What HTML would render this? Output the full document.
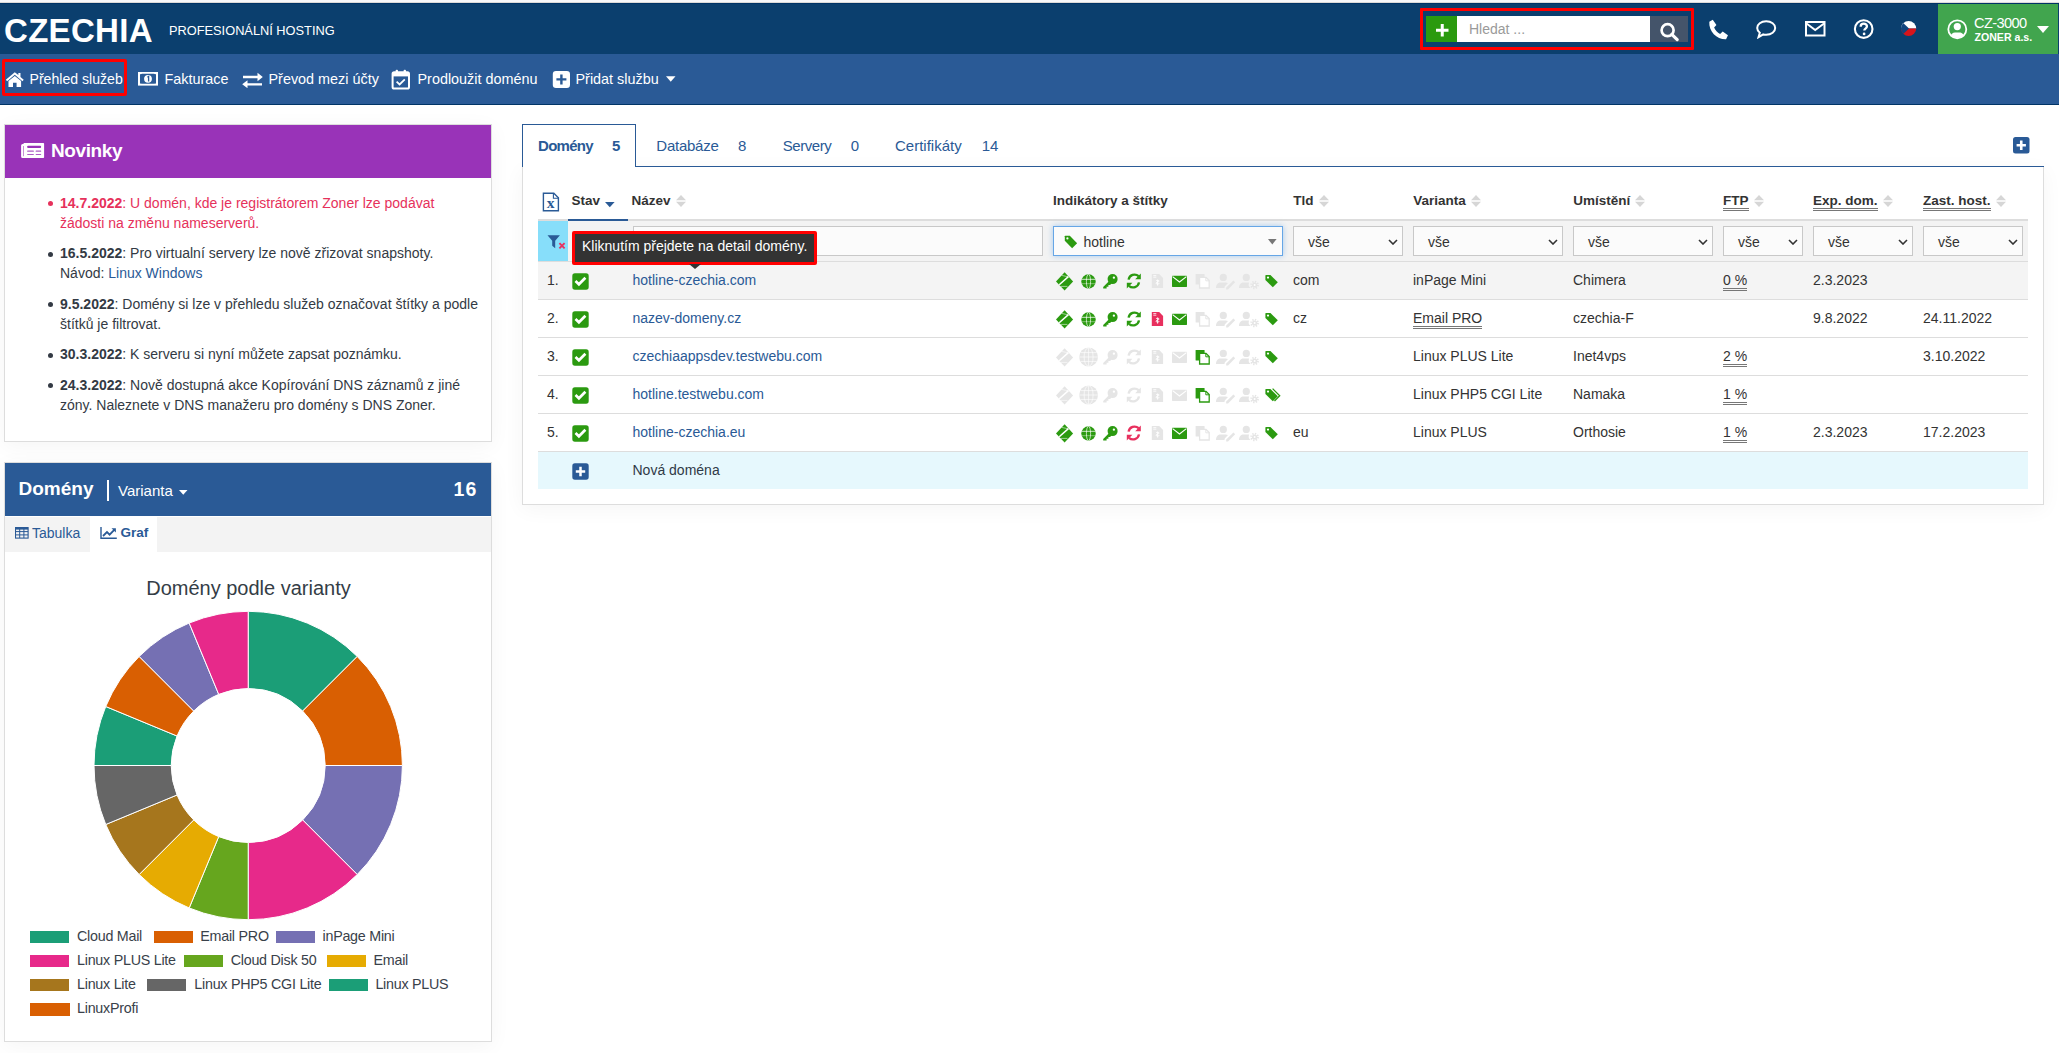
<!DOCTYPE html>
<html><head><meta charset="utf-8">
<style>
*{box-sizing:border-box}
html,body{margin:0;padding:0;width:2059px;height:1053px;overflow:hidden;background:#fff;font-family:"Liberation Sans",sans-serif;color:#333;font-size:14px}
.abs{position:absolute}
#topstrip{left:0;top:0;width:2059px;height:3px;background:#f8f8fa;border-bottom:1px solid #dcdad8}
#hdr{left:0;top:3px;width:2059px;height:51px;background:#0b3f6e;border-top:1px solid #003366}
#nav{left:0;top:54px;width:2059px;height:51px;background:#2a5a96;border-bottom:1px solid #013466}
.logo{left:4px;top:8.5px;font-weight:bold;font-size:33px;color:#fff;letter-spacing:0.3px;line-height:36px}
.tagline{left:169px;top:18.5px;font-size:12.8px;color:#fff;line-height:16px}
.navitem{color:#fff;font-size:14.4px;line-height:20px;white-space:nowrap;top:69px!important}
.redbox{border:3px solid #f00;border-radius:2px}
.panel{background:#fff;border:1px solid #ddd;box-shadow:0 4px 20px rgba(0,0,0,0.045)}
.news{margin:0;padding:0 0 0 60px;list-style:none;font-size:14px;line-height:20px;color:#333a44}
.news li{position:relative;margin-bottom:10.5px}
.news li:before{content:"";position:absolute;left:-12px;top:8.5px;width:5px;height:5px;border-radius:50%;background:currentColor}
.news li.pink{color:#e6315b}
.news a{color:#2a5a96}
.legt{font-size:14.3px;letter-spacing:-0.25px;color:#39414a;line-height:20px;white-space:nowrap}
.li{display:inline-block;margin-right:7px}
.li i{display:inline-block;width:40px;height:13px;vertical-align:top;margin-top:4px;margin-right:7px}
/*RCSS*/.tab{top:136.6px;line-height:18px;color:#2a5a96;white-space:nowrap}
.th{top:192px;font-size:13.5px;font-weight:bold;color:#333;line-height:18px;white-space:nowrap}
.th .sort{display:inline-block;width:10px;height:12px;margin-left:5px;vertical-align:-2px}
.td{font-size:14px;line-height:20px;color:#333;white-space:nowrap}
.link{color:#2a5a96}
.ul span{border-bottom:3px double #777;padding-bottom:0px}
.inp{background:#fbfbfb;border:1px solid #c8c8c8}
/*/RCSS*/</style></head><body>
<div id="topstrip" class="abs"></div>
<div id="hdr" class="abs">
  <div class="abs logo">CZECHIA</div>
  <div class="abs tagline">PROFESIONÁLNÍ HOSTING</div>
</div>
<!-- search -->
<div class="abs redbox" style="left:1420px;top:8px;width:274px;height:42px;border-radius:1px"></div>
<div class="abs" style="left:1426px;top:16px;width:31px;height:26px;background:#2a9a0e"></div>
<svg class="abs" style="left:1435.5px;top:23.5px" width="13" height="13" viewBox="0 0 13 13"><path d="M6.25 0v12.6M0 6.3h12.5" stroke="#fff" stroke-width="3"/></svg>
<div class="abs" style="left:1457px;top:16px;width:193px;height:26px;background:#fff"></div>
<div class="abs" style="left:1469px;top:20px;font-size:14px;line-height:18px;color:#9a9a9a">Hledat ...</div>
<div class="abs" style="left:1650px;top:16px;width:38px;height:26px;background:#44546a"></div>
<svg class="abs" style="left:1659px;top:22px" width="21" height="20" viewBox="0 0 21 20"><circle cx="8.6" cy="8.2" r="6" fill="none" stroke="#fff" stroke-width="2.7"/><path d="M12.8 12.4l5.4 5.2" stroke="#fff" stroke-width="3.2" stroke-linecap="round"/></svg>
<!-- phone -->
<svg class="abs" style="left:1706.5px;top:18.5px" width="22" height="21" viewBox="0 0 21 20"><path d="M2.2 2.5 L5.5 0.8 L9 5.6 L6.8 8.2 C8 11 9.8 13 12.5 14.3 L15 12 L20 15.5 L18.2 19.2 C9.5 19.5 1.5 12 2.2 2.5Z" fill="#fff"/></svg>
<!-- chat -->
<svg class="abs" style="left:1756px;top:20px" width="21" height="19" viewBox="0 0 21 19"><path d="M10.2 1.3C5 1.3 1.2 4.3 1.2 8c0 1.9 1 3.5 2.6 4.7L2.5 17.2 7.3 14.4c0.9 0.2 1.9 0.3 2.9 0.3 5.2 0 9-3 9-6.7S15.4 1.3 10.2 1.3z" fill="none" stroke="#fff" stroke-width="2"/></svg>
<!-- mail -->
<svg class="abs" style="left:1805px;top:21px" width="21" height="16" viewBox="0 0 21 16"><rect x="1" y="1" width="18.5" height="13.5" fill="none" stroke="#fff" stroke-width="2"/><path d="M1.5 2.5L10.2 9l8.8-6.5" fill="none" stroke="#fff" stroke-width="2"/></svg>
<!-- help -->
<svg class="abs" style="left:1853px;top:18.5px" width="22" height="21" viewBox="0 0 21 20"><circle cx="10.2" cy="9.6" r="8.4" fill="none" stroke="#fff" stroke-width="2"/><path d="M7.3 7.3c0-1.8 1.3-2.9 3-2.9s3 1.1 3 2.6c0 2.2-2.5 2.2-2.5 4" fill="none" stroke="#fff" stroke-width="2.2"/><circle cx="10.6" cy="14.2" r="1.3" fill="#fff"/></svg>
<!-- flag -->
<svg class="abs" style="left:1900px;top:20px" width="17" height="17" viewBox="0 0 17 17"><defs><clipPath id="fc"><circle cx="8.6" cy="8.5" r="7.6"/></clipPath></defs><g clip-path="url(#fc)"><rect x="0" y="0" width="17" height="8.5" fill="#fff"/><rect x="0" y="8.5" width="17" height="9" fill="#d7141a"/><path d="M0 0L9 8.5L0 17z" fill="#11457e"/></g></svg>
<!-- user -->
<div class="abs" style="left:1938px;top:4px;width:120px;height:50px;background:#41a54e"></div>
<svg class="abs" style="left:1947px;top:19px" width="21" height="21" viewBox="0 0 21 21"><defs><clipPath id="uc"><circle cx="10.3" cy="10.3" r="8.6"/></clipPath></defs><circle cx="10.3" cy="10.3" r="9" fill="none" stroke="#fff" stroke-width="1.8"/><g clip-path="url(#uc)"><circle cx="10.3" cy="7.6" r="3.6" fill="#fff"/><path d="M3 18.5c0.5-3.5 3-5 5-5h4.6c2 0 4.5 1.5 5 5v3H3z" fill="#fff"/></g></svg>
<div class="abs" style="left:1974px;top:14.5px;font-size:14.6px;letter-spacing:-0.6px;line-height:16px;color:#fff">CZ-3000</div>
<div class="abs" style="left:1974.5px;top:31px;font-size:10.6px;letter-spacing:0px;line-height:12px;color:#fff;font-weight:bold">ZONER a.s.</div>
<svg class="abs" style="left:2037px;top:26px" width="12" height="7" viewBox="0 0 12 7"><path d="M0 0h12L6 7z" fill="#fff"/></svg>
<div id="nav" class="abs"></div>
<div class="abs redbox" style="left:2px;top:59px;width:125px;height:37px"></div>
<svg class="abs" style="left:4.5px;top:70.5px" width="20" height="17" viewBox="0 0 19 16"><path d="M9.3 1.2L0.8 8.3l1.2 1.3L9.3 3.6l7.3 6 1.2-1.3-3.1-2.6V1.8h-2v2L9.3 1.2z" fill="#fff"/><path d="M3.3 9.4L9.3 4.6l6 4.8v5.8H11v-4H7.6v4H3.3z" fill="#fff"/></svg>
<div class="abs navitem" style="left:29.5px;top:70px;font-size:14.1px">Přehled služeb</div>
<svg class="abs" style="left:137px;top:71px" width="22" height="16" viewBox="0 0 22 16"><rect x="1" y="1" width="20" height="13.6" fill="#fff"/><path d="M3 3.2 Q5 3.2 5 2.8 H17 Q17 3.2 19 3.2 V12.4 Q17 12.4 17 12.8 H5 Q5 12.4 3 12.4Z" fill="#2a5a96"/><circle cx="11" cy="7.8" r="3.9" fill="#fff"/><path d="M10.4 6.2l1.2-0.8v5" stroke="#2a5a96" stroke-width="1.3" fill="none"/></svg>
<svg class="abs" style="left:242px;top:72px" width="21" height="16" viewBox="0 0 21 16"><path d="M1 3.8h14.5V0.8L20.8 5l-5.3 4.2V6.3H1z" fill="#fff"/><path d="M20 11.2H5.5V8.3L0.2 12.2l5.3 4V13.6H20z" fill="#fff"/></svg>
<svg class="abs" style="left:391px;top:69px" width="20" height="21" viewBox="0 0 20 21"><rect x="1.6" y="3.2" width="16.4" height="16.4" rx="1.6" fill="none" stroke="#fff" stroke-width="2"/><rect x="1.6" y="3.2" width="16.4" height="4.2" fill="#fff"/><rect x="4.6" y="0.8" width="2.4" height="4.4" rx="1" fill="#fff"/><rect x="12.6" y="0.8" width="2.4" height="4.4" rx="1" fill="#fff"/><path d="M5.6 12.6l3 2.8 5.2-5" fill="none" stroke="#fff" stroke-width="1.8"/></svg>
<svg class="abs" style="left:552px;top:70px" width="19" height="19" viewBox="0 0 19 19"><rect x="0.8" y="0.9" width="17.2" height="17" rx="3.2" fill="#fff"/><path d="M9.4 4.4v10M4.4 9.4h10" stroke="#2a5a96" stroke-width="2.4"/></svg>
<svg class="abs" style="left:666px;top:76px" width="10" height="6" viewBox="0 0 10 6"><path d="M0 0.3h9.5L4.75 5.8z" fill="#fff"/></svg>
<div class="abs navitem" style="left:164.5px;top:70px">Fakturace</div>
<div class="abs navitem" style="left:268.5px;top:70px">Převod mezi účty</div>
<div class="abs navitem" style="left:417.5px;top:70px">Prodloužit doménu</div>
<div class="abs navitem" style="left:575.5px;top:70px">Přidat službu</div>

<!-- Novinky panel -->
<div class="abs panel" style="left:4px;top:124px;width:488px;height:318px"></div>
<div class="abs" style="left:5px;top:125px;width:486px;height:53px;background:#9933b8"></div>
<svg class="abs" style="left:21px;top:142px" width="24" height="17" viewBox="0 0 24 17"><path d="M2.6 0.9H22.3a0.8 0.8 0 0 1 0.8 0.8V15.2a0.8 0.8 0 0 1-0.8 0.8H1.6A1.5 1.5 0 0 1 0.1 14.5V3.4A1.5 1.5 0 0 1 1.6 1.9H2.6z" fill="#fff"/><rect x="2.1" y="4" width="0.9" height="10.2" fill="#9933b8" opacity="0.6"/><rect x="6.1" y="3.7" width="14" height="2.2" rx="1" fill="#9933b8"/><rect x="6.1" y="8.6" width="6.8" height="1.2" rx="0.5" fill="#9933b8" opacity="0.8"/><rect x="14.6" y="8.6" width="5.6" height="1.2" rx="0.5" fill="#9933b8" opacity="0.8"/><rect x="6.1" y="11.9" width="6.8" height="1.2" rx="0.5" fill="#9933b8" opacity="0.8"/><rect x="14.6" y="11.9" width="5.6" height="1.2" rx="0.5" fill="#9933b8" opacity="0.8"/></svg>
<div class="abs" style="left:51px;top:139px;font-size:19px;letter-spacing:-0.4px;font-weight:bold;color:#fff;line-height:24px">Novinky</div>
<ul class="abs news" style="left:0;top:192.5px;width:480px">
<li class="pink"><b>14.7.2022</b>: U domén, kde je registrátorem Zoner lze podávat žádosti na změnu nameserverů.</li>
<li><b>16.5.2022</b>: Pro virtualní servery lze nově zřizovat snapshoty. Návod: <a>Linux</a> <a>Windows</a></li>
<li><b>9.5.2022</b>: Domény si lze v přehledu služeb označovat štítky a podle štítků je filtrovat.</li>
<li><b>30.3.2022</b>: K serveru si nyní můžete zapsat poznámku.</li>
<li><b>24.3.2022</b>: Nově dostupná akce Kopírování DNS záznamů z jiné zóny. Naleznete v DNS manažeru pro domény s DNS Zoner.</li>
</ul>
<!-- Domeny panel -->
<div class="abs panel" style="left:4px;top:462px;width:488px;height:580px"></div>
<div class="abs" style="left:5px;top:463px;width:486px;height:53px;background:#2a5a96"></div>
<div class="abs" style="left:18.5px;top:477px;font-size:19px;letter-spacing:0px;font-weight:bold;color:#fff;line-height:24px">Domény</div>
<div class="abs" style="left:107px;top:480px;width:1.6px;height:21px;background:#fff"></div>
<div class="abs" style="left:118px;top:481px;font-size:15px;color:#fff;line-height:20px">Varianta</div>
<svg class="abs" style="left:179px;top:489.5px" width="9" height="5" viewBox="0 0 9 5"><path d="M0 0h8.5L4.25 4.8z" fill="#fff"/></svg>
<div class="abs" style="left:453.5px;top:477px;font-size:19.5px;letter-spacing:1.2px;font-weight:bold;color:#fff;line-height:24px">16</div>
<div class="abs" style="left:5px;top:517px;width:486px;height:35px;background:#f3f3f3"></div>
<div class="abs" style="left:90px;top:517px;width:67px;height:35px;background:#fff"></div>
<svg class="abs" style="left:15px;top:527px" width="14" height="12" viewBox="0 0 14 12"><rect x="0.5" y="0.5" width="12.6" height="10.6" fill="none" stroke="#2a5a96" stroke-width="1.1"/><path d="M0.5 1.8h12.6" stroke="#2a5a96" stroke-width="1.6"/><path d="M0.5 4.6h12.6M0.5 7.9h12.6M4.7 2v9M8.9 2v9" stroke="#2a5a96" stroke-width="1"/></svg>
<div class="abs" style="left:32px;top:524px;font-size:14px;color:#2a5a96;line-height:18px">Tabulka</div>
<svg class="abs" style="left:100px;top:527px" width="17" height="12" viewBox="0 0 17 12"><path d="M1 0v11.2h15.8" fill="none" stroke="#2a5a96" stroke-width="1.4"/><path d="M3 9L7 5l2.6 2.6L14.5 2.6" fill="none" stroke="#2a5a96" stroke-width="1.8"/><path d="M11.5 1.2h4.4v4.4z" fill="#2a5a96"/></svg>
<div class="abs" style="left:120.5px;top:524px;font-size:13.5px;font-weight:bold;color:#2a5a96;line-height:18px">Graf</div>
<div class="abs" style="left:5px;top:576px;width:487px;text-align:center;font-size:20px;color:#343d46;line-height:24px">Domény podle varianty</div>
<svg class="abs" style="left:0;top:0" width="500" height="1053"><path d="M248.20 611.30A154.2 154.2 0 0 1 357.24 656.46L302.65 711.05A77 77 0 0 0 248.20 688.50Z" fill="#1b9e77" stroke="#fff" stroke-width="1"/><path d="M357.24 656.46A154.2 154.2 0 0 1 402.40 765.50L325.20 765.50A77 77 0 0 0 302.65 711.05Z" fill="#d95f02" stroke="#fff" stroke-width="1"/><path d="M402.40 765.50A154.2 154.2 0 0 1 357.24 874.54L302.65 819.95A77 77 0 0 0 325.20 765.50Z" fill="#7570b3" stroke="#fff" stroke-width="1"/><path d="M357.24 874.54A154.2 154.2 0 0 1 248.20 919.70L248.20 842.50A77 77 0 0 0 302.65 819.95Z" fill="#e7298a" stroke="#fff" stroke-width="1"/><path d="M248.20 919.70A154.2 154.2 0 0 1 189.19 907.96L218.73 836.64A77 77 0 0 0 248.20 842.50Z" fill="#66a61e" stroke="#fff" stroke-width="1"/><path d="M189.19 907.96A154.2 154.2 0 0 1 139.16 874.54L193.75 819.95A77 77 0 0 0 218.73 836.64Z" fill="#e6ab02" stroke="#fff" stroke-width="1"/><path d="M139.16 874.54A154.2 154.2 0 0 1 105.74 824.51L177.06 794.97A77 77 0 0 0 193.75 819.95Z" fill="#a6761d" stroke="#fff" stroke-width="1"/><path d="M105.74 824.51A154.2 154.2 0 0 1 94.00 765.50L171.20 765.50A77 77 0 0 0 177.06 794.97Z" fill="#666666" stroke="#fff" stroke-width="1"/><path d="M94.00 765.50A154.2 154.2 0 0 1 105.74 706.49L177.06 736.03A77 77 0 0 0 171.20 765.50Z" fill="#1b9e77" stroke="#fff" stroke-width="1"/><path d="M105.74 706.49A154.2 154.2 0 0 1 139.16 656.46L193.75 711.05A77 77 0 0 0 177.06 736.03Z" fill="#d95f02" stroke="#fff" stroke-width="1"/><path d="M139.16 656.46A154.2 154.2 0 0 1 189.19 623.04L218.73 694.36A77 77 0 0 0 193.75 711.05Z" fill="#7570b3" stroke="#fff" stroke-width="1"/><path d="M189.19 623.04A154.2 154.2 0 0 1 248.20 611.30L248.20 688.50A77 77 0 0 0 218.73 694.36Z" fill="#e7298a" stroke="#fff" stroke-width="1"/></svg>

<div class="abs" style="left:30.4px;top:930.5px;width:39px;height:12.6px;background:#1b9e77"></div><div class="abs legt" style="left:77px;top:926.0px">Cloud Mail</div><div class="abs" style="left:153.7px;top:930.5px;width:39px;height:12.6px;background:#d95f02"></div><div class="abs legt" style="left:200.3px;top:926.0px">Email PRO</div><div class="abs" style="left:276px;top:930.5px;width:39px;height:12.6px;background:#7570b3"></div><div class="abs legt" style="left:322.5px;top:926.0px">inPage Mini</div><div class="abs" style="left:30.4px;top:954.5px;width:39px;height:12.6px;background:#e7298a"></div><div class="abs legt" style="left:77px;top:950.0px">Linux PLUS Lite</div><div class="abs" style="left:184px;top:954.5px;width:39px;height:12.6px;background:#66a61e"></div><div class="abs legt" style="left:230.7px;top:950.0px">Cloud Disk 50</div><div class="abs" style="left:326.9px;top:954.5px;width:39px;height:12.6px;background:#e6ab02"></div><div class="abs legt" style="left:373.5px;top:950.0px">Email</div><div class="abs" style="left:30.4px;top:978.5px;width:39px;height:12.6px;background:#a6761d"></div><div class="abs legt" style="left:77px;top:974.0px">Linux Lite</div><div class="abs" style="left:146.9px;top:978.5px;width:39px;height:12.6px;background:#666666"></div><div class="abs legt" style="left:194.3px;top:974.0px">Linux PHP5 CGI Lite</div><div class="abs" style="left:328.8px;top:978.5px;width:39px;height:12.6px;background:#1b9e77"></div><div class="abs legt" style="left:375.4px;top:974.0px">Linux PLUS</div><div class="abs" style="left:30.4px;top:1002.5px;width:39.5px;height:13px;background:#d95f02"></div><div class="abs legt" style="left:77px;top:998.0px">LinuxProfi</div>
<!--RIGHT--><svg width="0" height="0" style="position:absolute"><defs>
<symbol id="i-dns" viewBox="0 0 22 20"><path d="M10.6 1.3L19.1 10.4 10.6 19.6 2 10.4z"/><path d="M14.4 5.6L5.2 13.8" stroke="#fff" stroke-width="1.5"/><path d="M7.6 4.4L14.2 5.8M7 15.4h6.4" stroke="#fff" stroke-opacity="0.55" stroke-width="1"/></symbol>
<symbol id="i-globe" viewBox="0 0 22 20"><circle cx="9.5" cy="10.5" r="7.2"/><ellipse cx="9.5" cy="10.5" rx="2.1" ry="7.2" fill="none" stroke="#fff" stroke-opacity="0.75" stroke-width="0.9"/><path d="M2.3 8.3h14.4" stroke="#fff" stroke-opacity="0.85" stroke-width="0.9"/><path d="M2.5 12.7h14" stroke="#fff" stroke-opacity="0.45" stroke-width="0.9"/></symbol>
<symbol id="i-globe2" viewBox="0 0 22 20"><circle cx="9.6" cy="10" r="9.4"/><path d="M0.2 10h18.8M9.6 0.6v18.8M1.4 5.6h16.4M1.4 14.4h16.4" stroke="#fff" stroke-opacity="0.7" stroke-width="0.9"/><ellipse cx="9.6" cy="10" rx="4.5" ry="9.4" fill="none" stroke="#fff" stroke-opacity="0.7" stroke-width="0.9"/></symbol>
<symbol id="i-key" viewBox="0 0 22 20"><circle cx="11.6" cy="8.1" r="5"/><path d="M8.4 9.8L2.2 16V17.5H5.6V15.7H7.4V13.9H9.1L11.4 11.6z"/><circle cx="12.9" cy="6.7" r="1.15" fill="#fff"/></symbol>
<symbol id="i-sync" viewBox="0 0 22 20"><path d="M4.6 8.6A6 6 0 0 1 14.6 5.2" fill="none" stroke="currentColor" stroke-width="2.3"/><path d="M16.8 2.6v5.6h-5.6z"/><path d="M15 11.4A6 6 0 0 1 5 14.8" fill="none" stroke="currentColor" stroke-width="2.3"/><path d="M2.8 17.4v-5.6h5.6z"/></symbol>
<symbol id="i-inv" viewBox="0 0 22 20"><path d="M2.8 3h7.4l3.9 3.9V17H2.8z"/><path d="M8.6 8.6v6M7 10c0-1 3.2-1 3.2 0s-3.2 1-3.2 2.2 3.2 1.2 3.2 0" fill="none" stroke="#fff" stroke-width="0.9"/><path d="M4.3 4.6h3M4.3 6.2h3" stroke="#fff" stroke-width="0.8"/></symbol>
<symbol id="i-mail" viewBox="0 0 22 20"><rect x="2" y="4.7" width="15" height="11.2" rx="0.6"/><path d="M2.6 5.6L9.5 11l6.9-5.4" fill="none" stroke="#fff" stroke-width="1.1"/></symbol>
<symbol id="i-copy" viewBox="0 0 22 20"><rect x="2.6" y="3" width="9" height="10.6" rx="0.6"/><path d="M6.6 6.4h6.4l3.2 3.2V17H6.6z" fill="#fff" stroke="currentColor" stroke-width="1.3"/><path d="M12.8 6.4v3.4h3.4" fill="none" stroke="currentColor" stroke-width="1"/></symbol>
<symbol id="i-uedit" viewBox="0 0 22 20"><circle cx="8.3" cy="6.4" r="3.6"/><path d="M1 17c0-3.6 2-5.6 4.6-5.6h5c1 0 1.8 0.3 2.4 0.7L9.8 15.6 9.4 17z"/><path d="M11.2 16.6l7.2-7.2 1.8 1.8-7.2 7.2h-1.8z"/></symbol>
<symbol id="i-ucog" viewBox="0 0 22 20"><circle cx="8.3" cy="6.4" r="3.6"/><path d="M1 17c0-3.6 2-5.6 4.6-5.6h5.5A4.6 4.6 0 0 0 12.8 17z"/><circle cx="16.6" cy="14" r="3.4" fill="none" stroke="currentColor" stroke-width="1.8" stroke-dasharray="1.35 1.3"/><circle cx="16.6" cy="14" r="2.6"/><circle cx="16.6" cy="14" r="1" fill="#fff"/></symbol>
<symbol id="i-tag" viewBox="0 0 22 20"><path d="M2.4 4.3v4.6l7.4 7.4 5-5-7.4-7.4H3.3z"/><circle cx="5" cy="6.6" r="1.1" fill="#fff"/></symbol>
<symbol id="i-tags" viewBox="0 0 22 20"><path d="M2.4 4.3v4.6l7.4 7.4 5-5-7.4-7.4H3.3z"/><path d="M9.6 3.6l7.1 7.2-5.2 5.2" fill="none" stroke="currentColor" stroke-width="1.3"/><circle cx="5" cy="6.6" r="1.1" fill="#fff"/></symbol>
</defs></svg>
<div class="abs" style="left:522px;top:167px;width:1522px;height:338px;background:#fff;border:1px solid #ddd;border-top:none;box-shadow:0 4px 20px rgba(0,0,0,0.045)"></div>
<div class="abs" style="left:522px;top:166px;width:1522px;height:1px;background:#2a5a96"></div>
<div class="abs" style="left:522px;top:124px;width:114px;height:43px;background:#fff;border:1px solid #2a5a96;border-bottom:none"></div>
<div class="abs tab" style="left:538px;font-weight:bold;font-size:15px;letter-spacing:-0.7px">Domény</div><div class="abs tab" style="left:612px;font-weight:bold;font-size:15px">5</div>
<div class="abs tab" style="left:656.3px;font-weight:normal;font-size:15px;letter-spacing:-0.25px">Databáze</div><div class="abs tab" style="left:738px;font-weight:normal;font-size:15px">8</div>
<div class="abs tab" style="left:782.8px;font-weight:normal;font-size:15px;letter-spacing:-0.45px">Servery</div><div class="abs tab" style="left:850.8px;font-weight:normal;font-size:15px">0</div>
<div class="abs tab" style="left:895px;font-weight:normal;font-size:15px;letter-spacing:0px">Certifikáty</div><div class="abs tab" style="left:981.7px;font-weight:normal;font-size:15px">14</div>
<svg class="abs" style="left:2013px;top:137px" width="17" height="17" viewBox="0 0 17 17"><rect x="0" y="0" width="16.5" height="16.5" rx="2.5" fill="#2a5a96"/><path d="M8.25 3.6v9.3M3.6 8.25h9.3" stroke="#fff" stroke-width="2.6"/></svg>
<div class="abs" style="left:538px;top:219px;width:1490px;height:2px;background:#ddd"></div>
<div class="abs" style="left:568px;top:218.5px;width:60px;height:2.5px;background:#2a5a96"></div>
<svg class="abs" style="left:542px;top:191.5px" width="18" height="20" viewBox="0 0 18 20"><path d="M1.4 1.2h10.4l4.6 4.6V18.8H1.4z" fill="none" stroke="#2a5a96" stroke-width="1.4"/><path d="M11.4 1.2v5h5" fill="none" stroke="#2a5a96" stroke-width="1.1"/><text x="8.6" y="16" font-family="Liberation Serif" font-weight="bold" font-size="15.5" fill="#2a5a96" text-anchor="middle">x</text></svg>
<div class="abs th" style="left:571.5px"><span>Stav</span></div>
<div class="abs th" style="left:631.6px"><span>Název</span><svg class="sort" width="10" height="12" viewBox="0 0 10 12"><path d="M0 5.2L5 0l5 5.2zM0 6.8h10L5 12z" fill="#d6d6d6"/></svg></div>
<div class="abs th" style="left:1053px"><span>Indikátory a štítky</span></div>
<div class="abs th" style="left:1293.3px"><span>Tld</span><svg class="sort" width="10" height="12" viewBox="0 0 10 12"><path d="M0 5.2L5 0l5 5.2zM0 6.8h10L5 12z" fill="#d6d6d6"/></svg></div>
<div class="abs th" style="left:1413.2px"><span>Varianta</span><svg class="sort" width="10" height="12" viewBox="0 0 10 12"><path d="M0 5.2L5 0l5 5.2zM0 6.8h10L5 12z" fill="#d6d6d6"/></svg></div>
<div class="abs th" style="left:1573.2px"><span>Umístění</span><svg class="sort" width="10" height="12" viewBox="0 0 10 12"><path d="M0 5.2L5 0l5 5.2zM0 6.8h10L5 12z" fill="#d6d6d6"/></svg></div>
<div class="abs th ul" style="left:1723px"><span>FTP</span><svg class="sort" width="10" height="12" viewBox="0 0 10 12"><path d="M0 5.2L5 0l5 5.2zM0 6.8h10L5 12z" fill="#d6d6d6"/></svg></div>
<div class="abs th ul" style="left:1813px"><span>Exp. dom.</span><svg class="sort" width="10" height="12" viewBox="0 0 10 12"><path d="M0 5.2L5 0l5 5.2zM0 6.8h10L5 12z" fill="#d6d6d6"/></svg></div>
<div class="abs th ul" style="left:1923px"><span>Zast. host.</span><svg class="sort" width="10" height="12" viewBox="0 0 10 12"><path d="M0 5.2L5 0l5 5.2zM0 6.8h10L5 12z" fill="#d6d6d6"/></svg></div>
<svg class="abs" style="left:605px;top:201.5px" width="10" height="6" viewBox="0 0 10 6"><path d="M0 0h9.6L4.8 5.3z" fill="#2a5a96"/></svg>
<div class="abs" style="left:538px;top:221px;width:1490px;height:40px;background:#f3f3f3"></div>
<div class="abs" style="left:538px;top:221px;width:30px;height:40px;background:#87defa"></div>
<svg class="abs" style="left:546px;top:234px" width="20" height="17" viewBox="0 0 20 17"><path d="M1.5 1.2h12.4L9.2 6.8v7.4L6.2 11.8V6.8z" fill="#2a5a96"/><path d="M13.4 9.2l5.2 5.2M18.6 9.2l-5.2 5.2" stroke="#e8305e" stroke-width="1.9"/></svg>
<div class="abs inp" style="left:633px;top:226px;width:410px;height:30px"></div>
<div class="abs" style="left:1053px;top:226px;width:230px;height:30px;background:#fbfbfb;border:1.5px solid #66a6e6;box-shadow:0 0 6px rgba(102,166,230,0.55)"></div>
<svg class="abs" style="left:1064px;top:235px" width="14" height="14" viewBox="0 0 14 14"><path d="M0.8 1.2v4.6l7.3 7.4 5-5L5.8 0.8H1.2z" fill="#2b9a10"/><circle cx="3.4" cy="3.4" r="1.1" fill="#fbfbfb"/></svg>
<div class="abs td" style="left:1083.5px;top:232px">hotline</div>
<svg class="abs" style="left:1267.5px;top:238.5px" width="9" height="6" viewBox="0 0 9 6"><path d="M0 0h8.6L4.3 5.6z" fill="#777"/></svg>
<div class="abs inp" style="left:1293px;top:226px;width:110px;height:30px"></div><div class="abs td" style="left:1308px;top:232px">vše</div>
<svg class="abs" style="left:1388px;top:238.5px" width="10" height="6.5" viewBox="0 0 10 6.5"><path d="M1 1l4 4 4-4" fill="none" stroke="#333" stroke-width="1.6"/></svg>
<div class="abs inp" style="left:1413px;top:226px;width:150px;height:30px"></div><div class="abs td" style="left:1428px;top:232px">vše</div>
<svg class="abs" style="left:1548px;top:238.5px" width="10" height="6.5" viewBox="0 0 10 6.5"><path d="M1 1l4 4 4-4" fill="none" stroke="#333" stroke-width="1.6"/></svg>
<div class="abs inp" style="left:1573px;top:226px;width:140px;height:30px"></div><div class="abs td" style="left:1588px;top:232px">vše</div>
<svg class="abs" style="left:1698px;top:238.5px" width="10" height="6.5" viewBox="0 0 10 6.5"><path d="M1 1l4 4 4-4" fill="none" stroke="#333" stroke-width="1.6"/></svg>
<div class="abs inp" style="left:1723px;top:226px;width:80px;height:30px"></div><div class="abs td" style="left:1738px;top:232px">vše</div>
<svg class="abs" style="left:1788px;top:238.5px" width="10" height="6.5" viewBox="0 0 10 6.5"><path d="M1 1l4 4 4-4" fill="none" stroke="#333" stroke-width="1.6"/></svg>
<div class="abs inp" style="left:1813px;top:226px;width:100px;height:30px"></div><div class="abs td" style="left:1828px;top:232px">vše</div>
<svg class="abs" style="left:1898px;top:238.5px" width="10" height="6.5" viewBox="0 0 10 6.5"><path d="M1 1l4 4 4-4" fill="none" stroke="#333" stroke-width="1.6"/></svg>
<div class="abs inp" style="left:1923px;top:226px;width:100px;height:30px"></div><div class="abs td" style="left:1938px;top:232px">vše</div>
<svg class="abs" style="left:2008px;top:238.5px" width="10" height="6.5" viewBox="0 0 10 6.5"><path d="M1 1l4 4 4-4" fill="none" stroke="#333" stroke-width="1.6"/></svg>
<div class="abs" style="left:538px;top:261px;width:1490px;height:38px;background:#f4f4f4;border-top:1px solid #ddd"></div>
<div class="abs td" style="left:547px;top:270.1px">1.</div>
<svg class="abs" style="left:572px;top:272.5px" width="17" height="17" viewBox="0 0 17 17"><rect x="0.3" y="0.3" width="16.4" height="16.4" rx="2.6" fill="#2b9a10"/><path d="M3.5 8.1l3.4 3.2 6.5-6.5" fill="none" stroke="#fff" stroke-width="2.7"/></svg>
<div class="abs td link" style="left:632.5px;top:270.1px">hotline-czechia.com</div>
<svg class="abs" style="left:1053.8px;top:270.5px" width="22" height="20" style="color:#2b9a10"><use href="#i-dns" fill="#2b9a10" color="#2b9a10"/></svg>
<svg class="abs" style="left:1078.5px;top:270.5px" width="22" height="20" style="color:#2b9a10"><use href="#i-globe" fill="#2b9a10" color="#2b9a10"/></svg>
<svg class="abs" style="left:1101px;top:270.5px" width="22" height="20" style="color:#2b9a10"><use href="#i-key" fill="#2b9a10" color="#2b9a10"/></svg>
<svg class="abs" style="left:1124.3px;top:270.5px" width="22" height="20" style="color:#2b9a10"><use href="#i-sync" fill="#2b9a10" color="#2b9a10"/></svg>
<svg class="abs" style="left:1148.8px;top:270.5px" width="22" height="20" style="color:#e5e5e5"><use href="#i-inv" fill="#e5e5e5" color="#e5e5e5"/></svg>
<svg class="abs" style="left:1170px;top:270.5px" width="22" height="20" style="color:#2b9a10"><use href="#i-mail" fill="#2b9a10" color="#2b9a10"/></svg>
<svg class="abs" style="left:1193px;top:270.5px" width="22" height="20" style="color:#e5e5e5"><use href="#i-copy" fill="#e5e5e5" color="#e5e5e5"/></svg>
<svg class="abs" style="left:1214.7px;top:270.5px" width="22" height="20" style="color:#e5e5e5"><use href="#i-uedit" fill="#e5e5e5" color="#e5e5e5"/></svg>
<svg class="abs" style="left:1237.7px;top:270.5px" width="22" height="20" style="color:#e5e5e5"><use href="#i-ucog" fill="#e5e5e5" color="#e5e5e5"/></svg>
<svg class="abs" style="left:1263px;top:270.5px" width="22" height="20" style="color:#2b9a10"><use href="#i-tag" fill="#2b9a10" color="#2b9a10"/></svg>
<div class="abs td" style="left:1293px;top:270.1px"><span>com</span></div>
<div class="abs td" style="left:1413px;top:270.1px"><span>inPage Mini</span></div>
<div class="abs td" style="left:1573px;top:270.1px"><span>Chimera</span></div>
<div class="abs td ul" style="left:1723px;top:270.1px"><span>0 %</span></div>
<div class="abs td" style="left:1813px;top:270.1px"><span>2.3.2023</span></div>
<div class="abs" style="left:538px;top:299px;width:1490px;height:38px;background:#fff;border-top:1px solid #ddd"></div>
<div class="abs td" style="left:547px;top:308.1px">2.</div>
<svg class="abs" style="left:572px;top:310.5px" width="17" height="17" viewBox="0 0 17 17"><rect x="0.3" y="0.3" width="16.4" height="16.4" rx="2.6" fill="#2b9a10"/><path d="M3.5 8.1l3.4 3.2 6.5-6.5" fill="none" stroke="#fff" stroke-width="2.7"/></svg>
<div class="abs td link" style="left:632.5px;top:308.1px">nazev-domeny.cz</div>
<svg class="abs" style="left:1053.8px;top:308.5px" width="22" height="20" style="color:#2b9a10"><use href="#i-dns" fill="#2b9a10" color="#2b9a10"/></svg>
<svg class="abs" style="left:1078.5px;top:308.5px" width="22" height="20" style="color:#2b9a10"><use href="#i-globe" fill="#2b9a10" color="#2b9a10"/></svg>
<svg class="abs" style="left:1101px;top:308.5px" width="22" height="20" style="color:#2b9a10"><use href="#i-key" fill="#2b9a10" color="#2b9a10"/></svg>
<svg class="abs" style="left:1124.3px;top:308.5px" width="22" height="20" style="color:#2b9a10"><use href="#i-sync" fill="#2b9a10" color="#2b9a10"/></svg>
<svg class="abs" style="left:1148.8px;top:308.5px" width="22" height="20" style="color:#e8305e"><use href="#i-inv" fill="#e8305e" color="#e8305e"/></svg>
<svg class="abs" style="left:1170px;top:308.5px" width="22" height="20" style="color:#2b9a10"><use href="#i-mail" fill="#2b9a10" color="#2b9a10"/></svg>
<svg class="abs" style="left:1193px;top:308.5px" width="22" height="20" style="color:#e5e5e5"><use href="#i-copy" fill="#e5e5e5" color="#e5e5e5"/></svg>
<svg class="abs" style="left:1214.7px;top:308.5px" width="22" height="20" style="color:#e5e5e5"><use href="#i-uedit" fill="#e5e5e5" color="#e5e5e5"/></svg>
<svg class="abs" style="left:1237.7px;top:308.5px" width="22" height="20" style="color:#e5e5e5"><use href="#i-ucog" fill="#e5e5e5" color="#e5e5e5"/></svg>
<svg class="abs" style="left:1263px;top:308.5px" width="22" height="20" style="color:#2b9a10"><use href="#i-tag" fill="#2b9a10" color="#2b9a10"/></svg>
<div class="abs td" style="left:1293px;top:308.1px"><span>cz</span></div>
<div class="abs td ul" style="left:1413px;top:308.1px"><span>Email PRO</span></div>
<div class="abs td" style="left:1573px;top:308.1px"><span>czechia-F</span></div>
<div class="abs td" style="left:1813px;top:308.1px"><span>9.8.2022</span></div>
<div class="abs td" style="left:1923px;top:308.1px"><span>24.11.2022</span></div>
<div class="abs" style="left:538px;top:337px;width:1490px;height:38px;background:#fff;border-top:1px solid #ddd"></div>
<div class="abs td" style="left:547px;top:346.1px">3.</div>
<svg class="abs" style="left:572px;top:348.5px" width="17" height="17" viewBox="0 0 17 17"><rect x="0.3" y="0.3" width="16.4" height="16.4" rx="2.6" fill="#2b9a10"/><path d="M3.5 8.1l3.4 3.2 6.5-6.5" fill="none" stroke="#fff" stroke-width="2.7"/></svg>
<div class="abs td link" style="left:632.5px;top:346.1px">czechiaappsdev.testwebu.com</div>
<svg class="abs" style="left:1053.8px;top:346.5px" width="22" height="20" style="color:#e5e5e5"><use href="#i-dns" fill="#e5e5e5" color="#e5e5e5"/></svg>
<svg class="abs" style="left:1078.5px;top:346.5px" width="22" height="20" style="color:#e5e5e5"><use href="#i-globe2" fill="#e5e5e5" color="#e5e5e5"/></svg>
<svg class="abs" style="left:1101px;top:346.5px" width="22" height="20" style="color:#e5e5e5"><use href="#i-key" fill="#e5e5e5" color="#e5e5e5"/></svg>
<svg class="abs" style="left:1124.3px;top:346.5px" width="22" height="20" style="color:#e5e5e5"><use href="#i-sync" fill="#e5e5e5" color="#e5e5e5"/></svg>
<svg class="abs" style="left:1148.8px;top:346.5px" width="22" height="20" style="color:#e5e5e5"><use href="#i-inv" fill="#e5e5e5" color="#e5e5e5"/></svg>
<svg class="abs" style="left:1170px;top:346.5px" width="22" height="20" style="color:#e5e5e5"><use href="#i-mail" fill="#e5e5e5" color="#e5e5e5"/></svg>
<svg class="abs" style="left:1193px;top:346.5px" width="22" height="20" style="color:#2b9a10"><use href="#i-copy" fill="#2b9a10" color="#2b9a10"/></svg>
<svg class="abs" style="left:1214.7px;top:346.5px" width="22" height="20" style="color:#e5e5e5"><use href="#i-uedit" fill="#e5e5e5" color="#e5e5e5"/></svg>
<svg class="abs" style="left:1237.7px;top:346.5px" width="22" height="20" style="color:#e5e5e5"><use href="#i-ucog" fill="#e5e5e5" color="#e5e5e5"/></svg>
<svg class="abs" style="left:1263px;top:346.5px" width="22" height="20" style="color:#2b9a10"><use href="#i-tag" fill="#2b9a10" color="#2b9a10"/></svg>
<div class="abs td" style="left:1413px;top:346.1px"><span>Linux PLUS Lite</span></div>
<div class="abs td" style="left:1573px;top:346.1px"><span>Inet4vps</span></div>
<div class="abs td ul" style="left:1723px;top:346.1px"><span>2 %</span></div>
<div class="abs td" style="left:1923px;top:346.1px"><span>3.10.2022</span></div>
<div class="abs" style="left:538px;top:375px;width:1490px;height:38px;background:#fff;border-top:1px solid #ddd"></div>
<div class="abs td" style="left:547px;top:384.1px">4.</div>
<svg class="abs" style="left:572px;top:386.5px" width="17" height="17" viewBox="0 0 17 17"><rect x="0.3" y="0.3" width="16.4" height="16.4" rx="2.6" fill="#2b9a10"/><path d="M3.5 8.1l3.4 3.2 6.5-6.5" fill="none" stroke="#fff" stroke-width="2.7"/></svg>
<div class="abs td link" style="left:632.5px;top:384.1px">hotline.testwebu.com</div>
<svg class="abs" style="left:1053.8px;top:384.5px" width="22" height="20" style="color:#e5e5e5"><use href="#i-dns" fill="#e5e5e5" color="#e5e5e5"/></svg>
<svg class="abs" style="left:1078.5px;top:384.5px" width="22" height="20" style="color:#e5e5e5"><use href="#i-globe2" fill="#e5e5e5" color="#e5e5e5"/></svg>
<svg class="abs" style="left:1101px;top:384.5px" width="22" height="20" style="color:#e5e5e5"><use href="#i-key" fill="#e5e5e5" color="#e5e5e5"/></svg>
<svg class="abs" style="left:1124.3px;top:384.5px" width="22" height="20" style="color:#e5e5e5"><use href="#i-sync" fill="#e5e5e5" color="#e5e5e5"/></svg>
<svg class="abs" style="left:1148.8px;top:384.5px" width="22" height="20" style="color:#e5e5e5"><use href="#i-inv" fill="#e5e5e5" color="#e5e5e5"/></svg>
<svg class="abs" style="left:1170px;top:384.5px" width="22" height="20" style="color:#e5e5e5"><use href="#i-mail" fill="#e5e5e5" color="#e5e5e5"/></svg>
<svg class="abs" style="left:1193px;top:384.5px" width="22" height="20" style="color:#2b9a10"><use href="#i-copy" fill="#2b9a10" color="#2b9a10"/></svg>
<svg class="abs" style="left:1214.7px;top:384.5px" width="22" height="20" style="color:#e5e5e5"><use href="#i-uedit" fill="#e5e5e5" color="#e5e5e5"/></svg>
<svg class="abs" style="left:1237.7px;top:384.5px" width="22" height="20" style="color:#e5e5e5"><use href="#i-ucog" fill="#e5e5e5" color="#e5e5e5"/></svg>
<svg class="abs" style="left:1263px;top:384.5px" width="22" height="20" style="color:#2b9a10"><use href="#i-tags" fill="#2b9a10" color="#2b9a10"/></svg>
<div class="abs td" style="left:1413px;top:384.1px"><span>Linux PHP5 CGI Lite</span></div>
<div class="abs td" style="left:1573px;top:384.1px"><span>Namaka</span></div>
<div class="abs td ul" style="left:1723px;top:384.1px"><span>1 %</span></div>
<div class="abs" style="left:538px;top:413px;width:1490px;height:38px;background:#fff;border-top:1px solid #ddd"></div>
<div class="abs td" style="left:547px;top:422.1px">5.</div>
<svg class="abs" style="left:572px;top:424.5px" width="17" height="17" viewBox="0 0 17 17"><rect x="0.3" y="0.3" width="16.4" height="16.4" rx="2.6" fill="#2b9a10"/><path d="M3.5 8.1l3.4 3.2 6.5-6.5" fill="none" stroke="#fff" stroke-width="2.7"/></svg>
<div class="abs td link" style="left:632.5px;top:422.1px">hotline-czechia.eu</div>
<svg class="abs" style="left:1053.8px;top:422.5px" width="22" height="20" style="color:#2b9a10"><use href="#i-dns" fill="#2b9a10" color="#2b9a10"/></svg>
<svg class="abs" style="left:1078.5px;top:422.5px" width="22" height="20" style="color:#2b9a10"><use href="#i-globe" fill="#2b9a10" color="#2b9a10"/></svg>
<svg class="abs" style="left:1101px;top:422.5px" width="22" height="20" style="color:#2b9a10"><use href="#i-key" fill="#2b9a10" color="#2b9a10"/></svg>
<svg class="abs" style="left:1124.3px;top:422.5px" width="22" height="20" style="color:#e8305e"><use href="#i-sync" fill="#e8305e" color="#e8305e"/></svg>
<svg class="abs" style="left:1148.8px;top:422.5px" width="22" height="20" style="color:#e5e5e5"><use href="#i-inv" fill="#e5e5e5" color="#e5e5e5"/></svg>
<svg class="abs" style="left:1170px;top:422.5px" width="22" height="20" style="color:#2b9a10"><use href="#i-mail" fill="#2b9a10" color="#2b9a10"/></svg>
<svg class="abs" style="left:1193px;top:422.5px" width="22" height="20" style="color:#e5e5e5"><use href="#i-copy" fill="#e5e5e5" color="#e5e5e5"/></svg>
<svg class="abs" style="left:1214.7px;top:422.5px" width="22" height="20" style="color:#e5e5e5"><use href="#i-uedit" fill="#e5e5e5" color="#e5e5e5"/></svg>
<svg class="abs" style="left:1237.7px;top:422.5px" width="22" height="20" style="color:#e5e5e5"><use href="#i-ucog" fill="#e5e5e5" color="#e5e5e5"/></svg>
<svg class="abs" style="left:1263px;top:422.5px" width="22" height="20" style="color:#2b9a10"><use href="#i-tag" fill="#2b9a10" color="#2b9a10"/></svg>
<div class="abs td" style="left:1293px;top:422.1px"><span>eu</span></div>
<div class="abs td" style="left:1413px;top:422.1px"><span>Linux PLUS</span></div>
<div class="abs td" style="left:1573px;top:422.1px"><span>Orthosie</span></div>
<div class="abs td ul" style="left:1723px;top:422.1px"><span>1 %</span></div>
<div class="abs td" style="left:1813px;top:422.1px"><span>2.3.2023</span></div>
<div class="abs td" style="left:1923px;top:422.1px"><span>17.2.2023</span></div>
<div class="abs" style="left:538px;top:451px;width:1490px;height:38px;background:#e6f8fd;border-top:1px solid #ddd"></div>
<svg class="abs" style="left:572px;top:462.5px" width="17" height="17" viewBox="0 0 17 17"><rect x="0.3" y="0.3" width="16.4" height="16.4" rx="2.6" fill="#2a5a96"/><path d="M8.5 3.8v9.4M3.8 8.5h9.4" stroke="#fff" stroke-width="2.5"/></svg>
<div class="abs td" style="left:632.5px;top:460.1px;color:#2f3a47">Nová doména</div>
<div class="abs" style="left:572px;top:231px;width:245px;height:34px;border:3px solid #f00;border-radius:2px;background:#333"></div>
<div class="abs" style="left:582px;top:237.3px;color:#fff;font-size:14px;line-height:18px;white-space:nowrap">Kliknutím přejdete na detail domény.</div>
<svg class="abs" style="left:689px;top:264px" width="12" height="6" viewBox="0 0 12 6"><path d="M0 0h12L6 5z" fill="#333"/></svg><!--/RIGHT-->
</body></html>
